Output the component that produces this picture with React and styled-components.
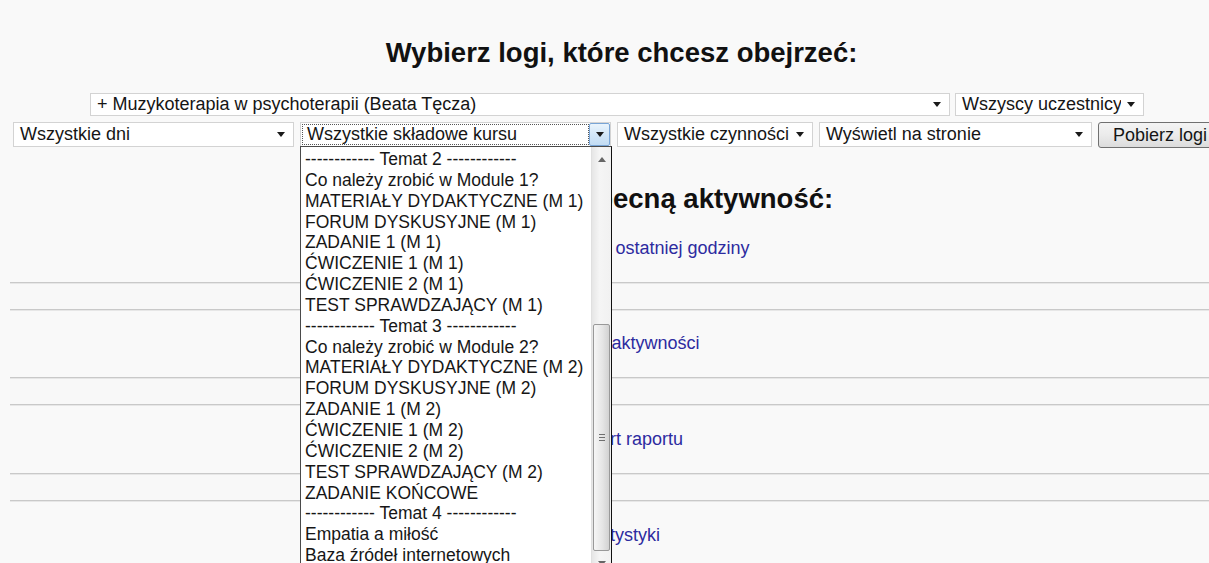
import React from 'react';
import styled, { createGlobalStyle } from 'styled-components';

const GlobalStyle = createGlobalStyle`
    html, body {
        margin: 0;
        padding: 0;
        overflow: hidden;
        background: #f9f9f9;
    }
    body {
        font-family: "Liberation Sans", Arial, sans-serif;
        color: #111;
    }
`

const Page = styled.div`
    width: 1243px;
    padding-top: 37px;
`
const Title = styled.h2`
    margin: 0;
    font-size: 27.5px;
    line-height: 31px;
    font-weight: bold;
    text-align: center;
    color: #111;
`
const Form = styled.div`
    margin-top: 25px;
    display: flex;
    flex-direction: column;
    gap: 6px;
`
const Row = styled.div`
    display: flex;
    align-items: flex-start;
    gap: ${p => p.$gap}px;
    justify-content: ${p => (p.$center ? 'center' : 'flex-start')};
    padding-left: ${p => p.$left || 0}px;
    padding-right: ${p => p.$right || 0}px;
`
const Select = styled.div`
    position: relative;
    flex: none;
    box-sizing: border-box;
    width: ${p => p.$w}px;
    height: ${p => p.$h}px;
    display: flex;
    align-items: center;
    background: #fff;
    border: 1px solid #d3d3d3;
    font-size: 18px;
    color: #151515;
`
const Label = styled.span`
    flex: 1;
    padding-left: 6px;
    white-space: nowrap;
    overflow: hidden;
`
const FocusLabel = styled.span`
    flex: 1;
    align-self: stretch;
    display: flex;
    align-items: center;
    margin: 1px 0 1px 1px;
    padding-left: 5px;
    outline: 1px dotted #555;
    outline-offset: -1px;
    white-space: nowrap;
`
const CaretBox = styled.span`
    display: flex;
    width: 8px;
    margin: 0 8px 0 6px;
`
const DropButton = styled.span`
    align-self: stretch;
    width: 19px;
    display: flex;
    align-items: center;
    justify-content: center;
    border: 1px solid #79a5d6;
    border-radius: 2px;
    background: linear-gradient(#eaf4fc, #d3e7f8 50%, #c2dcf3);
`
const Button = styled.div`
    flex: none;
    box-sizing: border-box;
    height: 26px;
    padding: 0 14px;
    display: flex;
    align-items: center;
    border: 1px solid #707070;
    border-radius: 3px;
    background: linear-gradient(#f4f4f4, #ebebeb 50%, #dcdcdc);
    font-size: 18px;
    color: #151515;
    white-space: nowrap;
`

/* open option list of the course module select */
const DropList = styled.div`
    position: absolute;
    top: 100%;
    left: -1px;
    width: 312px;
    height: 426px;
    box-sizing: border-box;
    display: flex;
    background: #fff;
    border: 1px solid #4a4a4a;
    border-right-color: #111;
    z-index: 10;
`
const Options = styled.div`
    flex: 1;
    overflow: hidden;
    padding: 2px 0 0 4px;
    font-size: 17.5px;
    line-height: 20.85px;
    color: #161616;
`
const Option = styled.div`
    white-space: nowrap;
`
const ScrollBar = styled.div`
    width: 19px;
    display: flex;
    flex-direction: column;
    background: linear-gradient(to right, #e6e6e6, #f5f5f5 40%, #f1f1f1);
    border-left: 1px solid #e0e0e0;
`
const ScrollArrow = styled.div`
    height: 24px;
    display: flex;
    align-items: center;
    justify-content: center;
    flex: none;
`
const Track = styled.div`
    flex: 1;
    padding-top: ${p => p.$offset}px;
`
const Thumb = styled.div`
    box-sizing: border-box;
    height: ${p => p.$h}px;
    margin: 0 1px;
    display: flex;
    flex-direction: column;
    align-items: center;
    justify-content: center;
    gap: 2px;
    border: 1px solid #999;
    border-radius: 2px;
    background: linear-gradient(to right, #f6f6f6, #e6e6e6 55%, #d2d2d2);
`
const Grip = styled.span`
    width: 6px;
    height: 1px;
    background: #6f6f6f;
`

const Heading = styled.h2`
    margin: 35px 0 0;
    font-size: 27.5px;
    line-height: 31px;
    font-weight: bold;
    text-align: center;
    color: #111;
`
const LinkRow = styled.div`
    height: ${p => p.$h}px;
    display: flex;
    align-items: center;
    justify-content: center;
`
const ReportLink = styled.a`
    color: #2d2ba0;
    font-size: 18px;
    text-decoration: none;
`
const Band = styled.div`
    height: 28px;
    margin-left: 10px;
    box-sizing: border-box;
    border-top: 1px solid #c9c9c9;
    border-bottom: 1px solid #c9c9c9;
    box-shadow: inset 0 1px 0 #e7e7e7, 0 1px 0 #e7e7e7;
    background: #f8f8f8;
`

const Caret = ({ color = '#1a1a1a', up }) => (
    <svg width="8" height="5" viewBox="0 0 8 5">
        <path d={up ? 'M0 5h8L4 0z' : 'M0 0h8L4 5z'} fill={color} />
    </svg>
)

const dashes = '------------'
const topic = n => `${dashes} Temat ${n} ${dashes}`

const modules = [
    topic(2),
    'Co należy zrobić w Module 1?',
    'MATERIAŁY DYDAKTYCZNE (M 1)',
    'FORUM DYSKUSYJNE (M 1)',
    'ZADANIE 1 (M 1)',
    'ĆWICZENIE 1 (M 1)',
    'ĆWICZENIE 2 (M 1)',
    'TEST SPRAWDZAJĄCY (M 1)',
    topic(3),
    'Co należy zrobić w Module 2?',
    'MATERIAŁY DYDAKTYCZNE (M 2)',
    'FORUM DYSKUSYJNE (M 2)',
    'ZADANIE 1 (M 2)',
    'ĆWICZENIE 1 (M 2)',
    'ĆWICZENIE 2 (M 2)',
    'TEST SPRAWDZAJĄCY (M 2)',
    'ZADANIE KOŃCOWE',
    topic(4),
    'Empatia a miłość',
    'Baza źródeł internetowych',
    'Literatura uzupełniająca',
]

const reports = [
    { label: 'Raporty aktywności', h: 67 },
    { label: 'Eksport raportu', h: 68 },
    { label: 'Statystyki', h: 68 },
]

const SelectBox = ({ w, h = 25, children }) => (
    <Select $w={w} $h={h}>
        <Label>{children}</Label>
        <CaretBox><Caret /></CaretBox>
    </Select>
)

const App = () => {
    return (
        <>
            <GlobalStyle />
            <Page>
                <Title>Wybierz logi, które chcesz obejrzeć:</Title>
                <Form>
                    <Row $center $gap={5} $right={9}>
                        <SelectBox w={860} h={23}>+ Muzykoterapia w psychoterapii (Beata Tęcza)</SelectBox>
                        <SelectBox w={189} h={23}>Wszyscy uczestnicy</SelectBox>
                    </Row>
                    <Row $gap={6} $left={13}>
                        <SelectBox w={281}>Wszystkie dni</SelectBox>
                        <Select $w={311} $h={25}>
                            <FocusLabel>Wszystkie składowe kursu</FocusLabel>
                            <DropButton><Caret /></DropButton>
                            <DropList>
                                <Options>
                                    {modules.map(m => <Option key={m}>{m}</Option>)}
                                </Options>
                                <ScrollBar>
                                    <ScrollArrow><Caret up color="#666" /></ScrollArrow>
                                    <Track $offset={153}>
                                        <Thumb $h={227}>
                                            <Grip />
                                            <Grip />
                                            <Grip />
                                        </Thumb>
                                    </Track>
                                    <ScrollArrow><Caret color="#666" /></ScrollArrow>
                                </ScrollBar>
                            </DropList>
                        </Select>
                        <SelectBox w={196}>Wszystkie czynności</SelectBox>
                        <SelectBox w={273}>Wyświetl na stronie</SelectBox>
                        <Button>Pobierz logi</Button>
                    </Row>
                </Form>

                <Heading>Lub obejrzyj obecną aktywność:</Heading>
                <LinkRow $h={68}>
                    <ReportLink href="#">Aktualne logi z ostatniej godziny</ReportLink>
                </LinkRow>
                {reports.map(r => (
                    <React.Fragment key={r.label}>
                        <Band />
                        <LinkRow $h={r.h}>
                            <ReportLink href="#">{r.label}</ReportLink>
                        </LinkRow>
                    </React.Fragment>
                ))}
            </Page>
        </>
    )
};

export default App;
